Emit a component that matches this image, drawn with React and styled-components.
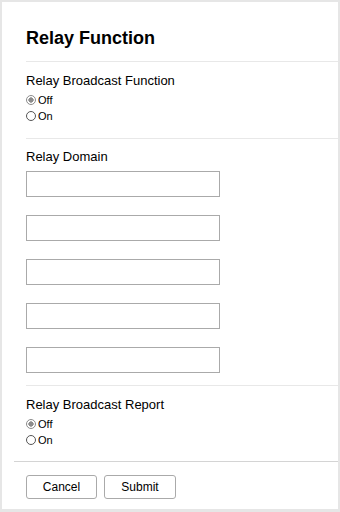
import React from "react";
import styled, { createGlobalStyle } from "styled-components";

const Global = createGlobalStyle`
  html, body { margin: 0; padding: 0; }
  body {
    background: #e6e6e6;
    font-family: "Liberation Sans", Arial, sans-serif;
    color: #000;
  }
  #root { padding: 2px 2px 3px 2px; }
`;

const Panel = styled.div`
  background: #fff;
  height: 507px;
  display: flex;
  flex-direction: column;
  box-sizing: border-box;
  padding-top: 25px;
`;

const Content = styled.div`
  padding-left: 24px;
`;

const Title = styled.h1`
  margin: 0 0 12px 0;
  font-size: 18px;
  line-height: 22px;
  font-weight: bold;
`;

const Section = styled.section`
  border-top: 1px solid #e8e8e8;
  padding-top: ${(p) => p.$top}px;
  padding-bottom: ${(p) => p.$bottom}px;
`;

const Label = styled.div`
  font-size: 13px;
  line-height: 16px;
  margin-bottom: ${(p) => p.$gap}px;
`;

const RadioRow = styled.label`
  display: flex;
  align-items: center;
  font-size: 11px;
  line-height: 16px;
  height: 16px;
`;

const Radio = styled.input.attrs({ type: "radio" })`
  appearance: none;
  -webkit-appearance: none;
  margin: 0 2px 0 0;
  width: 10px;
  height: 10px;
  border-radius: 50%;
  border: 1px solid #555;
  background: #fff;
  box-sizing: border-box;
  &:checked {
    border-color: #8c8c8c;
    background: radial-gradient(circle, #8c8c8c 0 2.4px, #fff 2.9px);
  }
`;

const InputList = styled.div`
  display: flex;
  flex-direction: column;
  gap: 18px;
`;

const TextInput = styled.input.attrs({ type: "text" })`
  width: 194px;
  height: 26px;
  box-sizing: border-box;
  border: 1px solid #aaa;
  border-radius: 0;
  margin: 0;
  padding: 0 4px;
  font-family: inherit;
  font-size: 12px;
  outline: none;
`;

const Footer = styled.div`
  margin-left: 12px;
  border-top: 1px solid #d4d4d4;
  padding: 13px 0 0 12px;
  display: flex;
  gap: 7px;
`;

const Button = styled.button`
  width: ${(p) => p.$w}px;
  height: 24px;
  box-sizing: border-box;
  background: #fff;
  border: 1px solid #aaa;
  border-radius: 3px;
  font-family: inherit;
  font-size: 12px;
  color: #000;
  padding: 0;
  cursor: pointer;
`;

function RadioGroup({ name }) {
  return (
    <>
      <RadioRow>
        <Radio name={name} defaultChecked />
        Off
      </RadioRow>
      <RadioRow>
        <Radio name={name} />
        On
      </RadioRow>
    </>
  );
}

export default function App() {
  return (
    <>
      <Global />
      <Panel>
        <Content>
          <Title>Relay Function</Title>
          <Section $top={11} $bottom={14}>
            <Label $gap={3}>Relay Broadcast Function</Label>
            <RadioGroup name="bcast" />
          </Section>
          <Section $top={10} $bottom={12}>
            <Label $gap={6}>Relay Domain</Label>
            <InputList>
              {[0, 1, 2, 3, 4].map((i) => (
                <TextInput key={i} />
              ))}
            </InputList>
          </Section>
          <Section $top={11} $bottom={13}>
            <Label $gap={3}>Relay Broadcast Report</Label>
            <RadioGroup name="report" />
          </Section>
        </Content>
        <Footer>
          <Button $w={71}>Cancel</Button>
          <Button $w={72}>Submit</Button>
        </Footer>
      </Panel>
    </>
  );
}
